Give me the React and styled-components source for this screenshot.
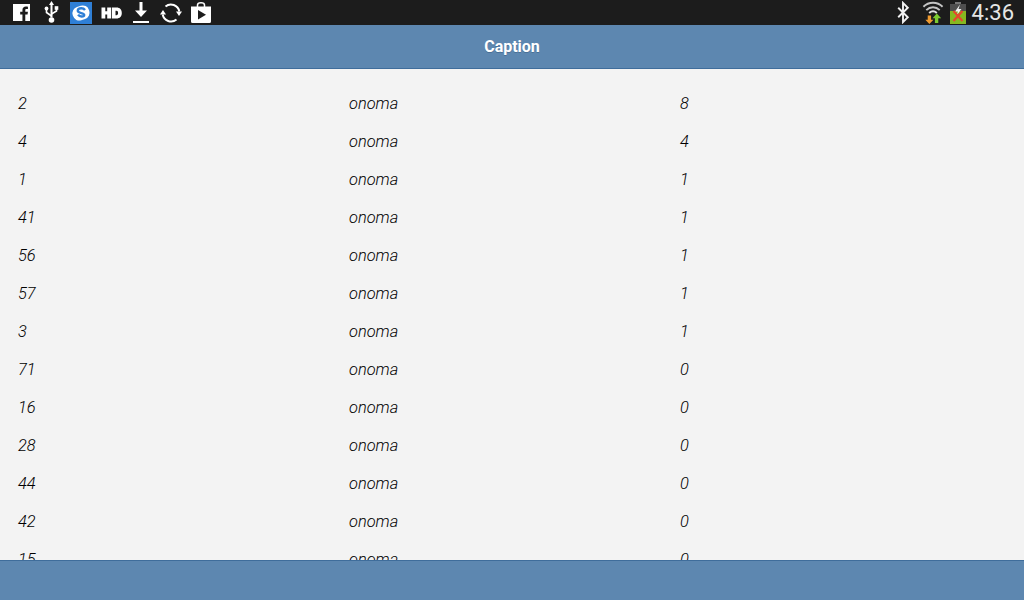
import styled, { createGlobalStyle } from "styled-components";

const GlobalStyle = createGlobalStyle`
  html, body {
    margin: 0;
    padding: 0;
    background: #f3f3f3;
  }
`;

const Screen = styled.div`
  width: 1024px;
  height: 600px;
  display: flex;
  flex-direction: column;
  overflow: hidden;
  font-family: Roboto, "Liberation Sans", sans-serif;
`;

const StatusBar = styled.div`
  height: 25px;
  flex: none;
  background: #1c1c1c;
  display: flex;
  align-items: center;
  justify-content: space-between;
  color: #fff;
`;

const IconGroup = styled.div`
  display: flex;
  align-items: center;
  height: 25px;
`;

const LeftIcons = styled(IconGroup)`
  padding-left: 6px;
`;

const IconSlot = styled.div`
  width: 30px;
  height: 25px;
  display: flex;
  align-items: center;
  justify-content: center;
`;

const RightIcons = styled(IconGroup)`
  padding-right: 10px;
  gap: 6px;
`;

const BluetoothSlot = styled.div`
  display: flex;
  margin-right: 6px;
`;

const Clock = styled.span`
  font-size: 22px;
  color: #e6e6e6;
  line-height: 25px;
`;

const Header = styled.header`
  height: 43px;
  flex: none;
  background: #5d87b0;
  border-bottom: 1px solid #3f6d9b;
  display: flex;
  align-items: center;
  justify-content: center;
  color: #fff;
  font-size: 16px;
  font-weight: 700;
  text-shadow: 0 1px 0 #4a7096;
`;

const List = styled.div`
  flex: 1;
  min-height: 0;
  overflow: hidden;
  background: #f3f3f3;
  padding: 15px 0 0 18px;
`;

const Row = styled.div`
  height: 38px;
  display: grid;
  grid-template-columns: 331px 331px 1fr;
  align-items: center;
  font-size: 16.4px;
  font-weight: 300;
  font-style: italic;
  color: #000;
`;

const Footer = styled.footer`
  height: 39px;
  flex: none;
  background: #5d87b0;
  border-top: 1px solid #3f6d9b;
`;

const rows = [
  [2, 8], [4, 4], [1, 1], [41, 1], [56, 1], [57, 1], [3, 1],
  [71, 0], [16, 0], [28, 0], [44, 0], [42, 0], [15, 0],
];

const FacebookIcon = () => (
  <svg width="17" height="17" viewBox="0 0 18 18">
    <path fillRule="evenodd" d="M0 0h18v18h-5v-7h2.400l.4-2.800H13V6.600c0-.9.3-1.300 1.300-1.300h1.500V2.800c-.5-.1-1.300-.1-2.100-.1-2.300 0-3.700 1.300-3.700 3.700v1.800H7.600V11H10v7H0z" fill="#fff" />
  </svg>
);

const UsbIcon = () => (
  <svg width="17" height="23" viewBox="0 0 16 23">
    <path d="M8 0l2.500 4H9v12.500H7V4H5.500z" fill="#fff" />
    <circle cx="8" cy="19" r="2.800" fill="#fff" />
    <path d="M8 15L3 11.500V9" fill="none" stroke="#fff" strokeWidth="1.600" />
    <circle cx="3" cy="7.500" r="1.900" fill="#fff" />
    <path d="M8 13l5-3V8" fill="none" stroke="#fff" strokeWidth="1.600" />
    <rect x="11.200" y="5.200" width="3.600" height="3.600" fill="#fff" />
  </svg>
);

const SkypeIcon = () => (
  <svg width="22" height="22" viewBox="0 0 22 22">
    <rect width="22" height="22" fill="#2f7fd6" />
    <rect x="2.500" y="4" width="17" height="14" rx="6.500" fill="#fff" transform="rotate(-18 11 11)" />
    <path d="M15 8c-.8-1.100-2.200-1.700-3.700-1.700-2 0-3.500 1-3.500 2.500 0 2.900 6.400 1.700 6.400 4.200 0 .9-1.100 1.500-2.600 1.500-1.600 0-2.800-.7-3.500-1.800" fill="none" stroke="#2f7fd6" strokeWidth="2.400" />
  </svg>
);

const HdIcon = () => (
  <svg width="21" height="12" viewBox="0 0 21 12">
    <path d="M0.500 0.500h3.800v3.700h1.900V0.500H10v11H6.200V7.500H4.300v4H0.500z" fill="#fff" />
    <path fillRule="evenodd" d="M10.800 0.500h4.700c3.400 0 5.300 2.200 5.300 5.500s-1.900 5.500-5.300 5.500h-4.700zM14.500 3.800v4.400h0.900c1.100 0 1.700-.8 1.700-2.200s-.6-2.200-1.700-2.200z" fill="#fff" />
  </svg>
);

const DownloadIcon = () => (
  <svg width="16" height="23" viewBox="0 0 16 23">
    <path d="M6.500 1h3v8.500H14L8 16 2 9.500h4.500z" fill="#fff" />
    <rect x="0" y="20" width="16" height="2" fill="#fff" />
  </svg>
);

const SyncIcon = () => (
  <svg width="22" height="22" viewBox="0 0 22 22" fill="none">
    <path d="M5.500 4.500A8.500 8.500 0 0 1 19.300 9.500" stroke="#fff" strokeWidth="2" />
    <path d="M16 9.500h6l-3 4.500z" fill="#fff" />
    <path d="M16.500 17.500A8.500 8.500 0 0 1 2.700 12.500" stroke="#fff" strokeWidth="2" />
    <path d="M0 12.500h6L3 8z" fill="#fff" />
  </svg>
);

const StoreIcon = () => (
  <svg width="20" height="21" viewBox="0 0 20 21">
    <path d="M6.500 5V3C6.500 1.700 8 .8 10 .8s3.500.9 3.500 2.200v2" fill="none" stroke="#fff" strokeWidth="1.500" />
    <path fillRule="evenodd" d="M0 4.500h20v15A1.500 1.500 0 0 1 18.500 21h-17A1.500 1.500 0 0 1 0 19.500zM7 8v9.500l8-4.800z" fill="#fff" />
  </svg>
);

const BluetoothIcon = () => (
  <svg width="14" height="23" viewBox="0 0 14 24" fill="none">
    <path d="M2 7l10 10-5 5V2l5 5L2 17" stroke="#f0f0f0" strokeWidth="2" />
  </svg>
);

const WifiIcon = () => (
  <svg width="22" height="23" viewBox="0 0 22 24" fill="none">
    <path d="M1 6C6.500 0.500 15.500 0.500 21 6" stroke="#c4c4c4" strokeWidth="2" />
    <path d="M4 9.500c4-4 10-4 14 0" stroke="#c4c4c4" strokeWidth="2" />
    <path d="M7 12.500c2.400-2.200 5.600-2.200 8 0" stroke="#e0e0e0" strokeWidth="2" />
    <path d="M5.500 15h3.500v4.500h2.500L7.200 24 3 19.500h2.500z" fill="#ef9a2e" />
    <path d="M13 23v-5h-2.500l4.500-5 4.500 5H16.500v5z" fill="#7ccb2f" />
  </svg>
);

const BatteryIcon = () => (
  <svg width="16" height="22" viewBox="0 0 16 22">
    <rect x="5" y="0" width="6" height="2" fill="#777" />
    <rect x="0" y="2" width="16" height="20" fill="#4f4f4f" />
    <rect x="0" y="9" width="16" height="13" fill="#86b81f" />
    <path d="M10 2.500l-5 7h3l-1.500 4 5-6.500H8.500z" fill="#f2f2f2" />
    <path d="M3.500 9l9 10M12.500 9l-9 10" stroke="#e5482d" strokeWidth="2.200" />
  </svg>
);

const App = () => {
  return (
    <Screen>
      <GlobalStyle />
      <StatusBar>
        <LeftIcons>
          <IconSlot><FacebookIcon /></IconSlot>
          <IconSlot><UsbIcon /></IconSlot>
          <IconSlot><SkypeIcon /></IconSlot>
          <IconSlot><HdIcon /></IconSlot>
          <IconSlot><DownloadIcon /></IconSlot>
          <IconSlot><SyncIcon /></IconSlot>
          <IconSlot><StoreIcon /></IconSlot>
        </LeftIcons>
        <RightIcons>
          <BluetoothSlot><BluetoothIcon /></BluetoothSlot>
          <WifiIcon />
          <BatteryIcon />
          <Clock>4:36</Clock>
        </RightIcons>
      </StatusBar>
      <Header>Caption</Header>
      <List>
        {rows.map(([id, count]) => (
          <Row key={id}>
            <span>{id}</span>
            <span>onoma</span>
            <span>{count}</span>
          </Row>
        ))}
      </List>
      <Footer />
    </Screen>
  );
};

export default App;
